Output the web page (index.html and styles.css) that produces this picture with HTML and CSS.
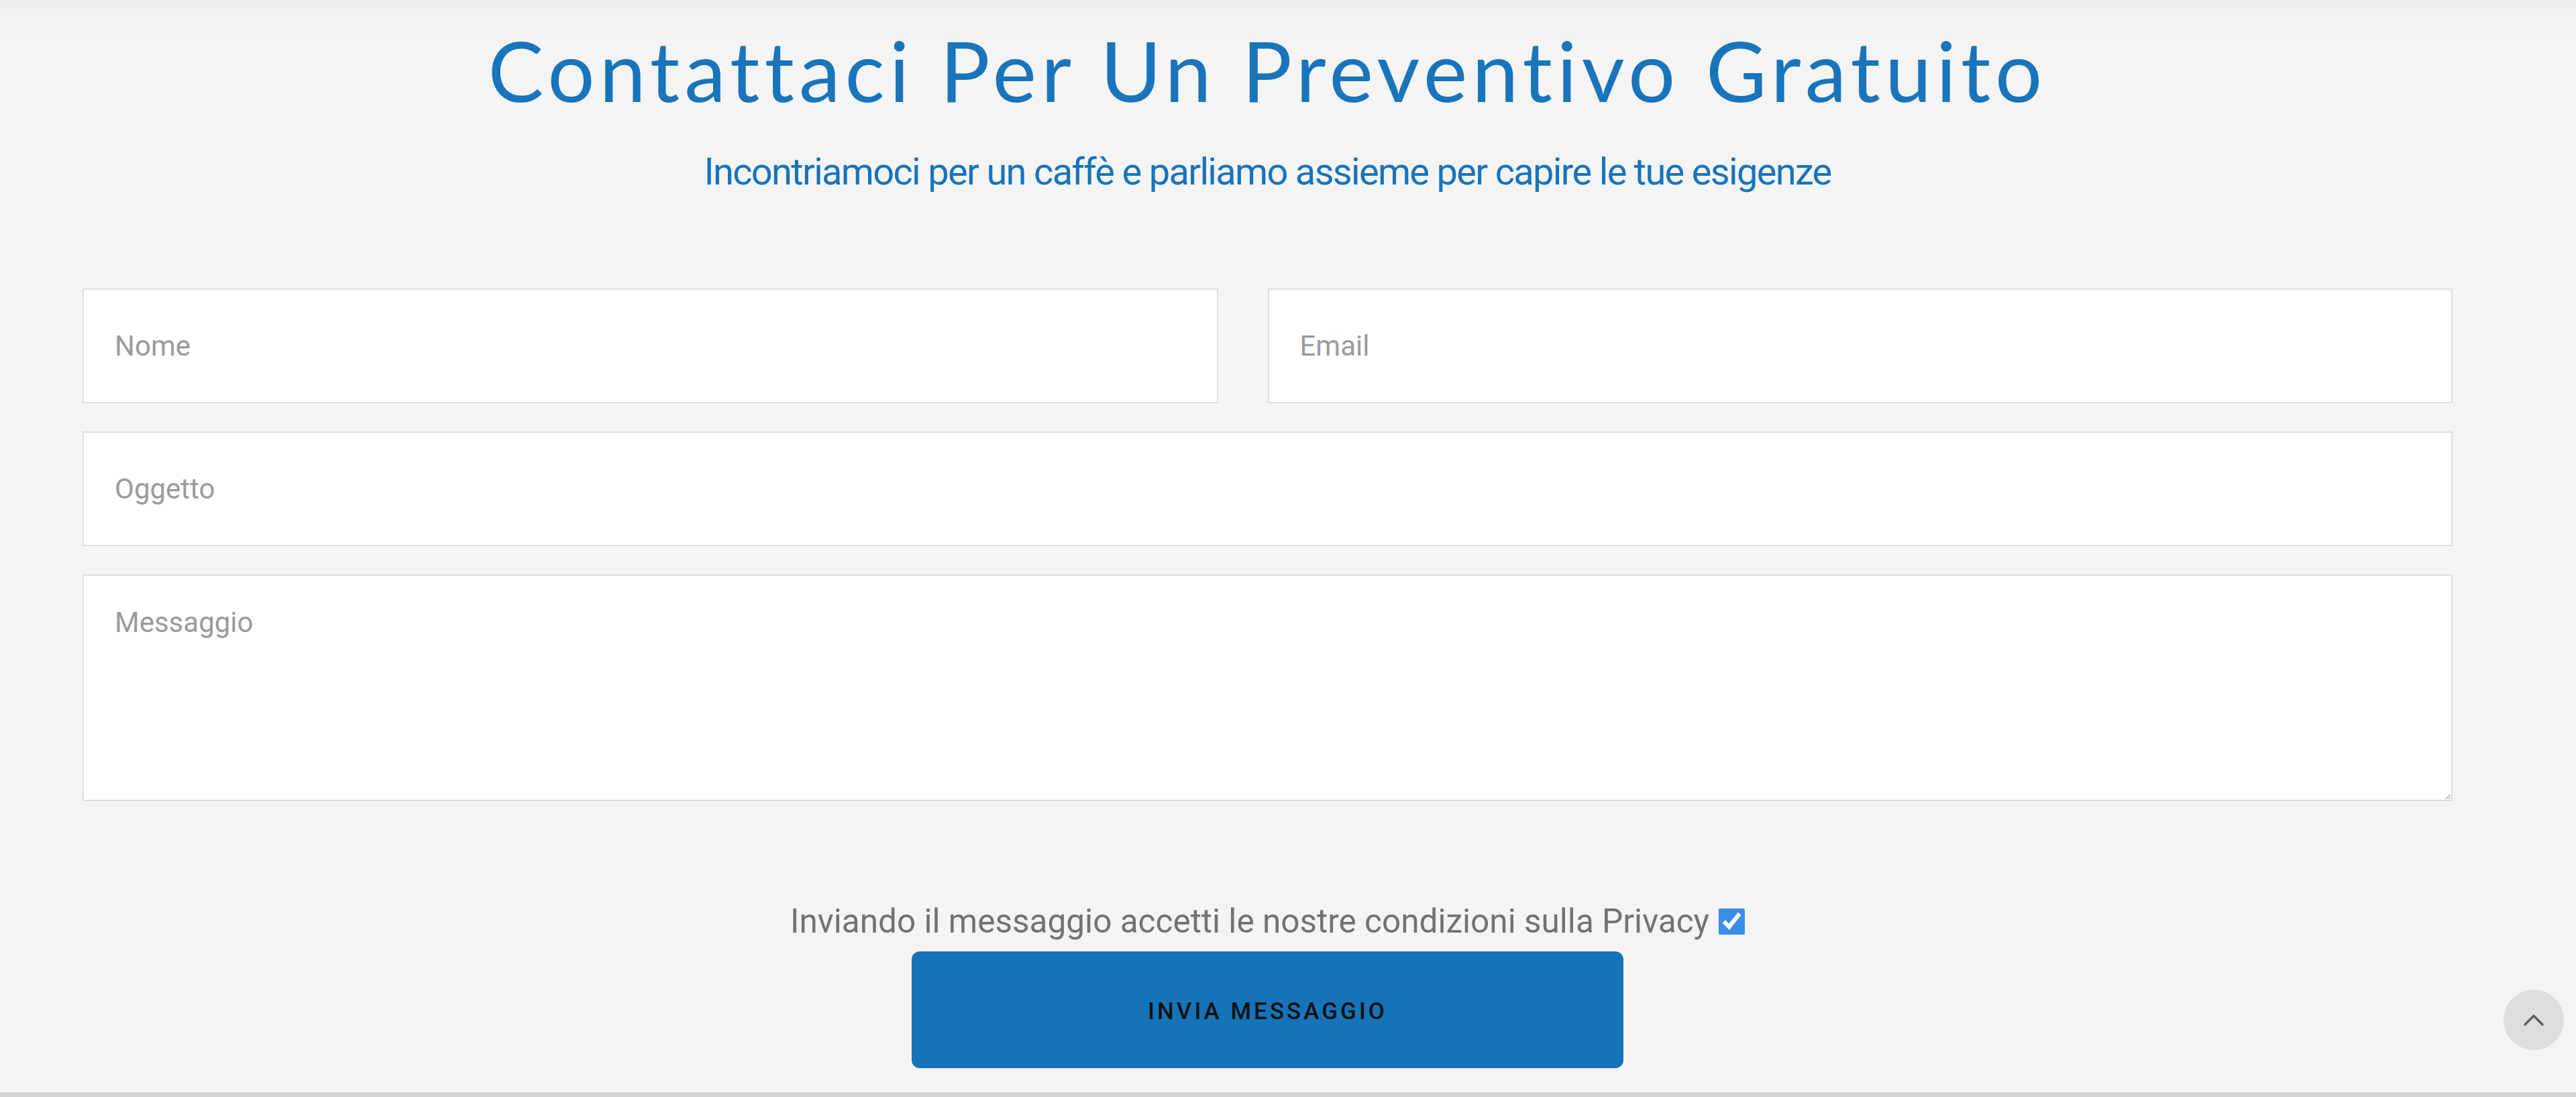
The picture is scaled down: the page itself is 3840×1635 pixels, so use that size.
FILE: index.html
```html
<!DOCTYPE html>
<html lang="it">
<head>
    <meta charset="UTF-8">
    <meta name="viewport" content="width=device-width, initial-scale=1.0">
    <title>Contattaci</title>
    <link rel="stylesheet" href="styles.css">
</head>
<body>
    <section class="contact">
        <h1 class="contact-title">Contattaci Per Un Preventivo Gratuito</h1>
        <p class="contact-subtitle">Incontriamoci per un caffè e parliamo assieme per capire le tue esigenze</p>

        <form class="contact-form" onsubmit="return false;">
            <div class="form-row two-cols">
                <div class="field field-left">
                    <input type="text" name="nome" placeholder="Nome">
                </div>
                <div class="field">
                    <input type="email" name="email" placeholder="Email">
                </div>
            </div>
            <div class="form-row">
                <input type="text" name="oggetto" placeholder="Oggetto">
            </div>
            <div class="form-row">
                <textarea name="messaggio" placeholder="Messaggio"></textarea>
            </div>

            <label class="privacy">
                <span>Inviando il messaggio accetti le nostre condizioni sulla Privacy</span>
                <input type="checkbox" name="privacy" checked>
            </label>

            <button type="submit" class="send-btn">INVIA MESSAGGIO</button>
        </form>
    </section>

    <div class="page-divider"></div>

    <!-- torna su -->
    <a href="#" class="back-to-top" aria-label="Torna su">
        <svg width="30" height="18" viewBox="0 0 30 18" fill="none">
            <path d="M2 16 L15 3 L28 16" stroke="#5a5a5a" stroke-width="3.2" stroke-linecap="round" stroke-linejoin="round"/>
        </svg>
    </a>
</body>
</html>
```

FILE: styles.css
```css
:root {
    --brand-blue: #1874bb;
    --field-border: #dedede;
    --placeholder: #9b9b9b;
}

body {
    margin: 0;
    font-family: Roboto, "Liberation Sans", Arial, sans-serif;
    background-color: #f4f4f4;
    background-image: linear-gradient(to bottom, #eeeeee 0, #f2f2f2 30px, #f4f4f4 70px);
    background-repeat: no-repeat;
}

.contact {
    width: 3533px;
    margin-left: 123px;
    padding: 30px 0 36px;
}

.contact-title {
    margin: 0;
    font-family: Lato, "Open Sans", sans-serif;
    font-weight: 400;
    font-size: 124px;
    line-height: 1.2;
    letter-spacing: 7px;
    font-variant-ligatures: none;
    text-align: center;
    color: var(--brand-blue);
}

.contact-subtitle {
    margin: 44px 0 0;
    font-size: 56px;
    line-height: 1.2;
    letter-spacing: -1.7px;
    text-align: center;
    color: var(--brand-blue);
}

.contact-form {
    margin-top: 140px;
}

.form-row {
    margin-bottom: 42px;
}

.two-cols {
    display: grid;
    grid-template-columns: 1fr 1fr;
}

.field-left {
    padding-right: 74px;
}

input[type="text"],
input[type="email"],
textarea {
    display: block;
    width: 100%;
    box-sizing: border-box;
    border: 2px solid var(--field-border);
    border-radius: 0;
    background: #fff;
    font-family: Roboto, sans-serif;
    font-size: 42px;
    color: #333;
    padding: 0 46px;
    outline: none;
}

input[type="text"],
input[type="email"] {
    height: 171px;
}

textarea {
    height: 338px;
    padding-top: 45px;
    resize: vertical;
}

::placeholder {
    color: var(--placeholder);
}

.privacy {
    display: flex;
    justify-content: center;
    align-items: center;
    gap: 14px;
    margin-top: 150px;
    font-size: 49.5px;
    line-height: 1.2;
    color: #727272;
}

.privacy input {
    width: 39px;
    height: 39px;
    margin: 0;
    accent-color: #3a8ee8;
}

.send-btn {
    display: block;
    width: 1061px;
    height: 174px;
    margin: 15px auto 0;
    border: none;
    border-radius: 12px;
    background: #1673b8;
    color: #111;
    font-family: Roboto, sans-serif;
    font-size: 35px;
    font-weight: 500;
    letter-spacing: 4px;
    padding-top: 6px;
    cursor: pointer;
}

.page-divider {
    height: 7px;
    background: #d4d4d4;
}

.back-to-top {
    position: fixed;
    right: 18px;
    bottom: 70px;
    width: 90px;
    height: 90px;
    border-radius: 50%;
    background: #dedede;
    display: flex;
    align-items: center;
    justify-content: center;
}
```
